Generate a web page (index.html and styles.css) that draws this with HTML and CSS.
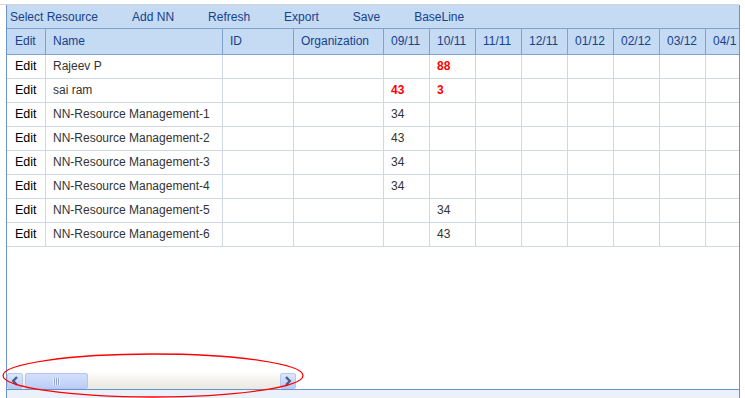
FILE: index.html
```html
<!DOCTYPE html>
<html lang="en">
<head>
  <meta charset="UTF-8" />
  <title>Resource Grid</title>
  <link rel="stylesheet" href="styles.css">
</head>
<body>

  <div class="topline"></div>

  <div class="panel">
    <div class="toolbar">
      <span class="tb-item">Select Resource</span>
      <span class="tb-item">Add NN</span>
      <span class="tb-item">Refresh</span>
      <span class="tb-item">Export</span>
      <span class="tb-item">Save</span>
      <span class="tb-item">BaseLine</span>
    </div>

    <div class="grid-wrap">
      <div class="grid header-row" id="headerRow"></div>
      <div id="rowList">
        <!-- rows are built below -->
      </div>
    </div>

    <div class="spacer"></div>

    <div class="hscroll">
      <div class="sb-btn">
        <svg width="8" height="10" viewBox="0 0 8 10"><path d="M6 1 L2.2 5 L6 9" fill="none" stroke="#4a5d86" stroke-width="2.4"/></svg>
      </div>
      <div class="sb-track">
        <div class="sb-thumb"><span class="grip"></span></div>
      </div>
      <div class="sb-btn">
        <svg width="8" height="10" viewBox="0 0 8 10"><path d="M2 1 L5.8 5 L2 9" fill="none" stroke="#4a5d86" stroke-width="2.4"/></svg>
      </div>
    </div>

    <div class="footer"></div>
  </div>

  <svg class="mark" width="310" height="48" viewBox="0 0 310 48">
    <ellipse cx="153" cy="23.5" rx="150" ry="21.5" fill="none" stroke="#ff0000" stroke-width="1.3"/>
  </svg>

  <script>
    const columns = ['Edit', 'Name', 'ID', 'Organization', '09/11', '10/11', '11/11', '12/11', '01/12', '02/12', '03/12', '04/1'];

    const rows = [
      { name: 'Rajeev P', values: { '10/11': [88, true] } },
      { name: 'sai ram', values: { '09/11': [43, true], '10/11': [3, true] } },
      { name: 'NN-Resource Management-1', values: { '09/11': [34] } },
      { name: 'NN-Resource Management-2', values: { '09/11': [43] } },
      { name: 'NN-Resource Management-3', values: { '09/11': [34] } },
      { name: 'NN-Resource Management-4', values: { '09/11': [34] } },
      { name: 'NN-Resource Management-5', values: { '10/11': [34] } },
      { name: 'NN-Resource Management-6', values: { '10/11': [43] } }
    ];

    // header cells
    const headerRow = document.getElementById('headerRow');
    columns.forEach((col, i) => {
      const cell = document.createElement('div');
      cell.className = i === 0 ? 'hcell edit' : 'hcell';
      cell.textContent = col;
      headerRow.appendChild(cell);
    });

    // data rows
    const rowList = document.getElementById('rowList');
    rows.forEach(row => {
      const div = document.createElement('div');
      div.className = 'grid data-row';
      columns.forEach((col, i) => {
        const cell = document.createElement('div');
        cell.className = 'cell';
        if (i === 0) {
          cell.classList.add('edit');
          cell.textContent = 'Edit';
        } else if (i === 1) {
          cell.textContent = row.name;
        } else if (row.values[col]) {
          const [num, hot] = row.values[col];
          cell.textContent = num;
          if (hot) cell.classList.add('hot');
        }
        div.appendChild(cell);
      });
      rowList.appendChild(div);
    });
  </script>

</body>
</html>
```

FILE: styles.css
```css
body {
  margin: 0;
  font-family: "Liberation Sans", Arial, sans-serif;
  font-size: 12px;
  background: #fff;
  position: relative;
}

.topline {
  width: 739px;
  height: 4px;
  border-bottom: 1px solid #d4d4d4;
}

.panel {
  margin-left: 6px;
  width: 734px;
  height: 393px;
  box-sizing: border-box;
  border-left: 1px solid #6a93c9;
  border-right: 1px solid #6a93c9;
  display: flex;
  flex-direction: column;
  overflow: hidden;
}

.toolbar {
  flex: none;
  height: 24px;
  box-sizing: border-box;
  background: #c5daf3;
  border-bottom: 1px solid #7ea2d2;
  display: flex;
  align-items: center;
  gap: 34px;
  padding-left: 3px;
  color: #15428b;
}

.grid-wrap {
  flex: none;
  overflow: hidden;
}

.grid {
  display: grid;
  grid-template-columns: 39px 177px 71px 90px repeat(8, 46px);
  width: 745px;
}

.header-row {
  height: 26px;
  box-sizing: border-box;
  background: #c5daf3;
  border-bottom: 1px solid #7ea2d2;
  color: #15428b;
}

.hcell {
  border-right: 1px solid #7ea2d2;
  padding-left: 7px;
  line-height: 25px;
  white-space: nowrap;
  overflow: hidden;
}

.data-row {
  height: 24px;
  box-sizing: border-box;
  border-bottom: 1px solid #d0d7e5;
  color: #333;
}

.cell {
  border-right: 1px solid #d0d7e5;
  padding-left: 7px;
  line-height: 23px;
  white-space: nowrap;
  overflow: hidden;
}

.hcell.edit, .cell.edit {
  padding-left: 8px;
}

.cell.edit {
  color: #000;
  font-size: 12.5px;
}

.cell.hot {
  color: #ff0000;
  font-weight: bold;
}

.spacer {
  flex: 1;
}

.hscroll {
  flex: none;
  width: 289px;
  height: 16px;
  display: flex;
}

.sb-btn {
  width: 16px;
  height: 16px;
  box-sizing: border-box;
  border: 1px solid #b7c8ee;
  border-radius: 2px;
  background: linear-gradient(#dde6fc, #b9cbf4);
  display: flex;
  align-items: center;
  justify-content: center;
}

.sb-track {
  flex: 1;
  background: linear-gradient(#fdfdfb, #f2f1eb 50%, #ebe9e0);
  padding-left: 2px;
}

.sb-thumb {
  width: 63px;
  height: 16px;
  box-sizing: border-box;
  border: 1px solid #b3c5f0;
  border-radius: 2px;
  background: linear-gradient(#d4dffb, #bccdf6);
  display: flex;
  align-items: center;
  justify-content: center;
}

.grip {
  width: 7px;
  height: 7px;
  background: repeating-linear-gradient(to right, #eef2fe 0 1px, #8ea3d6 1px 2px);
}

.footer {
  flex: none;
  height: 9px;
  box-sizing: border-box;
  border-top: 1px solid #6a93c9;
  background: #eaf1fb;
}

.mark {
  position: absolute;
  left: 0;
  top: 352px;
}
```
